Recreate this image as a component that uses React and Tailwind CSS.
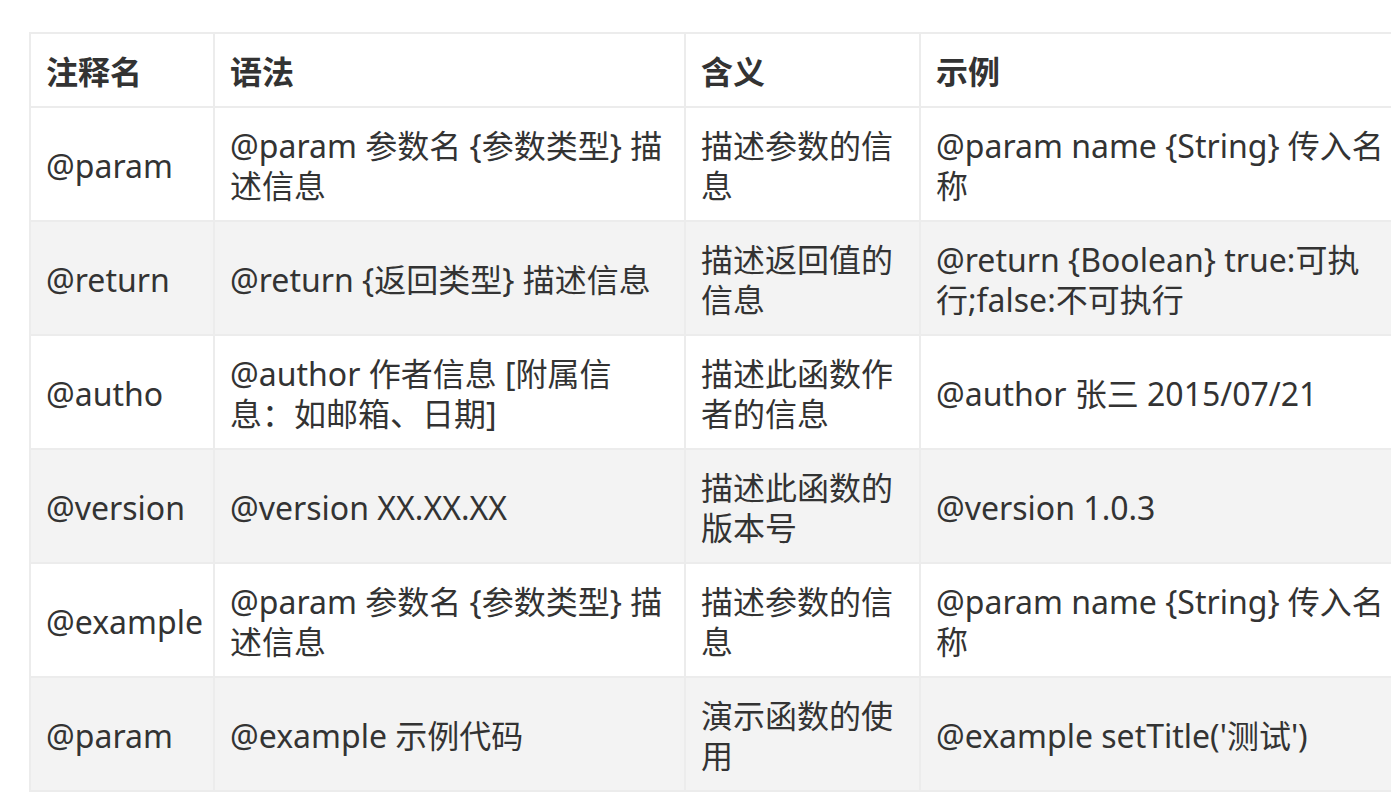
import React from 'react';

const ROWS = [
  ['@param', '@param 参数名 {参数类型} 描述信息', '描述参数的信息', '@param name {String} 传入名称'],
  ['@return', '@return {返回类型} 描述信息', '描述返回值的信息', '@return {Boolean} true:可执行;false:不可执行'],
  ['@autho', '@author 作者信息 [附属信息：如邮箱、日期]', '描述此函数作者的信息', '@author 张三 2015/07/21'],
  ['@version', '@version XX.XX.XX', '描述此函数的版本号', '@version 1.0.3'],
  ['@example', '@param 参数名 {参数类型} 描述信息', '描述参数的信息', '@param name {String} 传入名称'],
  ['@param', '@example 示例代码', '演示函数的使用', "@example setTitle('测试')"],
];

const HEAD = ['注释名', '语法', '含义', '示例'];

const App = () => {
  return (
    <div
      className="w-[1391px] h-[792px] overflow-hidden bg-white pt-[32px] pl-[29px] text-[#333333]"
      style={{ fontFamily: '"Noto Sans", "Noto Sans CJK SC", sans-serif' }}
    >
      <table className="table-fixed border-collapse w-[1380px] text-[32px] leading-[40px]">
        <colgroup>
          <col className="w-[184px]" />
          <col className="w-[471px]" />
          <col className="w-[235px]" />
          <col className="w-[490px]" />
        </colgroup>
        <thead>
          <tr>
            {HEAD.map(h => (
              <th key={h} className="border-2 border-[#ececec] pl-[15px] pr-4 pt-[18px] pb-[14px] text-left font-bold align-middle">
                {h}
              </th>
            ))}
          </tr>
        </thead>
        <tbody>
          {ROWS.map((r, i) => (
            <tr key={i} className={i % 2 === 1 ? 'bg-[#f3f3f3]' : 'bg-white'}>
              {r.map((c, j) => (
                <td
                  key={j}
                  className={`border-2 border-[#ececec] pl-[15px] pr-4 pt-[18px] pb-[14px] align-middle ${j === 0 ? 'whitespace-nowrap' : 'break-words'}`}
                >
                  {c}
                </td>
              ))}
            </tr>
          ))}
        </tbody>
      </table>
    </div>
  );
};

export default App;
